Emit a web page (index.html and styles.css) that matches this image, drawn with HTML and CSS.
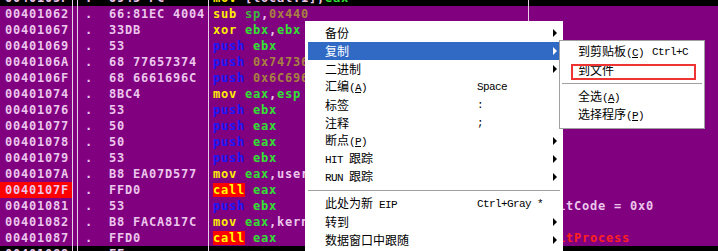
FILE: index.html
```html
<!DOCTYPE html>
<html>
<head>
<meta charset="utf-8">
<link rel="stylesheet" href="styles.css">
</head>
<body>
<div class="pane">
  <div class="row sel"><span class="c a">0040105F</span><span class="c g"></span><span class="c h">.  8945 FC</span><span class="c d"><span class="m">mov</span> <span class="p">[local.1],</span><span class="r">eax</span></span><span class="c k"></span></div>
  <div class="row"><span class="c a">00401062</span><span class="c g"></span><span class="c h">.  66:81EC 4004</span><span class="c d"><span class="m">sub</span> <span class="r2">sp</span><span class="p">,</span><span class="n">0x440</span></span><span class="c k"></span></div>
  <div class="row"><span class="c a">00401067</span><span class="c g"></span><span class="c h">.  33DB</span><span class="c d"><span class="m">xor</span> <span class="r">ebx</span><span class="p">,</span><span class="r">ebx</span></span><span class="c k"></span></div>
  <div class="row"><span class="c a">00401069</span><span class="c g"></span><span class="c h">.  53</span><span class="c d"><span class="s">push</span> <span class="r">ebx</span></span><span class="c k"></span></div>
  <div class="row"><span class="c a">0040106A</span><span class="c g"></span><span class="c h">.  68 77657374</span><span class="c d"><span class="s">push</span> <span class="n">0x74736577</span></span><span class="c k"></span></div>
  <div class="row"><span class="c a">0040106F</span><span class="c g"></span><span class="c h">.  68 6661696C</span><span class="c d"><span class="s">push</span> <span class="n">0x6C696166</span></span><span class="c k"></span></div>
  <div class="row"><span class="c a">00401074</span><span class="c g"></span><span class="c h">.  8BC4</span><span class="c d"><span class="m">mov</span> <span class="r">eax</span><span class="p">,</span><span class="r">esp</span></span><span class="c k"></span></div>
  <div class="row"><span class="c a">00401076</span><span class="c g"></span><span class="c h">.  53</span><span class="c d"><span class="s">push</span> <span class="r">ebx</span></span><span class="c k"></span></div>
  <div class="row"><span class="c a">00401077</span><span class="c g"></span><span class="c h">.  50</span><span class="c d"><span class="s">push</span> <span class="r">eax</span></span><span class="c k"></span></div>
  <div class="row"><span class="c a">00401078</span><span class="c g"></span><span class="c h">.  50</span><span class="c d"><span class="s">push</span> <span class="r">eax</span></span><span class="c k"></span></div>
  <div class="row"><span class="c a">00401079</span><span class="c g"></span><span class="c h">.  53</span><span class="c d"><span class="s">push</span> <span class="r">ebx</span></span><span class="c k"></span></div>
  <div class="row"><span class="c a">0040107A</span><span class="c g"></span><span class="c h">.  B8 EA07D577</span><span class="c d"><span class="m">mov</span> <span class="r">eax</span><span class="p">,user32.MessageBoxA</span></span><span class="c k"></span></div>
  <div class="row"><span class="c a bp">0040107F</span><span class="c g"></span><span class="c h">.  FFD0</span><span class="c d"><span class="cl">call</span> <span class="r">eax</span></span><span class="c k"></span></div>
  <div class="row"><span class="c a">00401081</span><span class="c g"></span><span class="c h">.  53</span><span class="c d"><span class="s">push</span> <span class="r">ebx</span></span><span class="c k"><span class="cm">ExitCode = 0x0</span></span></div>
  <div class="row"><span class="c a">00401082</span><span class="c g"></span><span class="c h">.  B8 FACA817C</span><span class="c d"><span class="m">mov</span> <span class="r">eax</span><span class="p">,kernel32.ExitProcess</span></span><span class="c k"></span></div>
  <div class="row"><span class="c a">00401087</span><span class="c g"></span><span class="c h">.  FFD0</span><span class="c d"><span class="cl">call</span> <span class="r">eax</span></span><span class="c k"><span class="cm red">ExitProcess</span></span></div>
  <div class="row sel"><span class="c a">00401089</span><span class="c g"></span><span class="c h">.  FF</span><span class="c d"></span><span class="c k"></span></div>
</div>

<div class="menu">
  <div class="mi"><span class="lb">备份</span><span class="sc"></span><span class="ar"></span></div>
  <div class="mi hi"><span class="lb">复制</span><span class="sc"></span><span class="ar"></span></div>
  <div class="mi"><span class="lb">二进制</span><span class="sc"></span><span class="ar"></span></div>
  <div class="mi"><span class="lb">汇编<span class="l">(<u>A</u>)</span></span><span class="sc l">Space</span><span class="na"></span></div>
  <div class="mi"><span class="lb">标签</span><span class="sc l">:</span><span class="na"></span></div>
  <div class="mi"><span class="lb">注释</span><span class="sc l">;</span><span class="na"></span></div>
  <div class="mi"><span class="lb">断点<span class="l">(<u>P</u>)</span></span><span class="sc"></span><span class="ar"></span></div>
  <div class="mi"><span class="lb"><span class="l">HIT </span>跟踪</span><span class="sc"></span><span class="ar"></span></div>
  <div class="mi"><span class="lb"><span class="l">RUN </span>跟踪</span><span class="sc"></span><span class="ar"></span></div>
  <div class="sep"></div>
  <div class="mi"><span class="lb">此处为新<span class="l"> EIP</span></span><span class="sc l">Ctrl+Gray *</span><span class="na"></span></div>
  <div class="mi"><span class="lb">转到</span><span class="sc"></span><span class="ar"></span></div>
  <div class="mi"><span class="lb">数据窗口中跟随</span><span class="sc"></span><span class="ar"></span></div>
  <div class="mi"><span class="lb">查找</span><span class="sc"></span><span class="ar"></span></div>
</div>

<div class="menu sub">
  <div class="mi"><span class="lb">到剪贴板<span class="l">(<u>C</u>)</span></span><span class="sc l">Ctrl+C</span></div>
  <div class="mi"><span class="lb">到文件</span><span class="sc"></span></div>
  <div class="sep"></div>
  <div class="mi"><span class="lb">全选<span class="l">(<u>A</u>)</span></span><span class="sc"></span></div>
  <div class="mi"><span class="lb">选择程序<span class="l">(<u>P</u>)</span></span><span class="sc"></span></div>
</div>

<div class="mark"></div>
</body>
</html>
```

FILE: styles.css
```css
html, body {
  margin: 0;
  padding: 0;
}
body {
  width: 718px;
  height: 251px;
  overflow: hidden;
  background: #800080;
  position: relative;
}
.pane {
  margin-top: -10px;
  font-family: "DejaVu Sans Mono", "Liberation Mono", monospace;
  font-weight: bold;
  font-size: 12px;
  letter-spacing: 0.78px;
  color: #ecc6ec;
}
.row {
  display: grid;
  grid-template-columns: 73px 5px 131px 320px 1fr;
  height: 16px;
  line-height: 16px;
}
.row.sel {
  background: #000;
}
.c {
  box-sizing: border-box;
  white-space: pre;
  overflow: hidden;
  height: 16px;
}
.a { border-right: 1px solid #e8d0e8; padding-left: 5px; }
.g { border-right: 1px solid #e8d0e8; }
.h { border-right: 1px solid #e8d0e8; padding-left: 7px; }
.d { border-right: 1px solid #e8d0e8; padding-left: 4px; }
.k { padding-left: 13px; }
.a.bp { background: #ff0000; }
.m { color: #ffee00; }
.s { color: #1818ff; }
.r { color: #33e033; }
.r2 { color: #3cb83c; }
.p { color: #ecc6ec; }
.n { color: #a88040; }
.cl {
  color: #ffff00;
  background: #ff0000;
  display: inline-block;
  height: 14px;
  line-height: 14px;
  vertical-align: top;
  margin-top: 1px;
}
.cm { color: #ecc6ec; }
.cm.red { color: #ff2020; }

.menu {
  position: absolute;
  left: 305px;
  top: 21px;
  width: 258px;
  box-sizing: border-box;
  background: #fff;
  padding: 3px;
  font-family: "Noto Sans CJK SC", "Liberation Mono", sans-serif;
  font-size: 12px;
  color: #000;
}
.mi {
  display: flex;
  align-items: center;
  height: 18px;
  line-height: 18px;
  padding-left: 17px;
  padding-right: 3px;
  white-space: pre;
}
.mi.hi {
  background: #316ac5;
  color: #fff;
}
.lb { width: 152px; flex: none; }
.sc { flex: 1; }
.l {
  font-family: "Liberation Mono", monospace;
  font-size: 11px;
  letter-spacing: -0.6px;
}
.ar {
  width: 0;
  height: 0;
  border-top: 4px solid transparent;
  border-bottom: 4px solid transparent;
  border-left: 4px solid #000;
}
.mi.hi .ar { border-left-color: #fff; }
.na { width: 4px; }
.sep {
  height: 9px;
  display: flex;
  align-items: center;
}
.sep::before {
  content: "";
  display: block;
  flex: 1;
  height: 1px;
  background: #a0a0a0;
}
.menu.sub {
  left: 559px;
  top: 40px;
  width: 146px;
  padding: 2px 2px 4px 2px;
  border: 1px solid #a0a0a0;
}
.sub .mi { padding-left: 16px; }
.sub .lb { width: 74px; }
.mark {
  position: absolute;
  left: 571px;
  top: 64px;
  width: 125px;
  height: 16px;
  box-sizing: border-box;
  border: 2px solid #e33;
}
```
